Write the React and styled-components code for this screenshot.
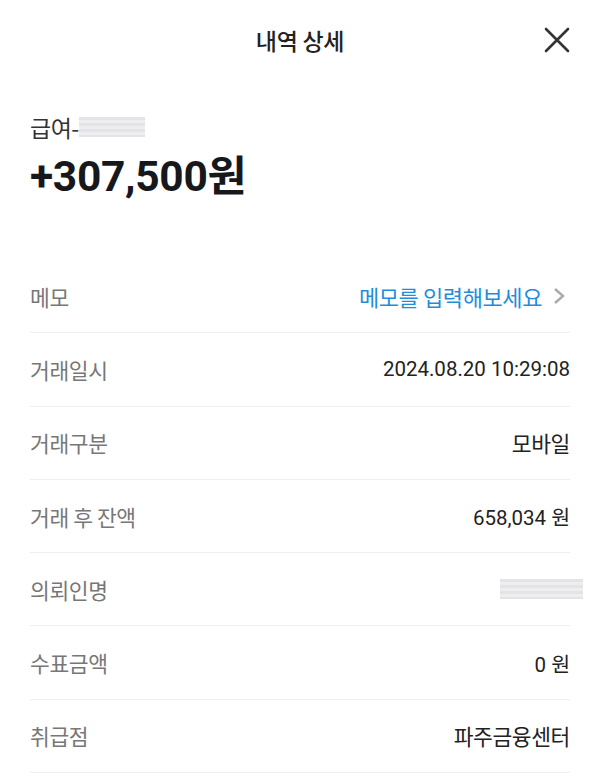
import React from 'react'
import styled, { createGlobalStyle } from 'styled-components';

const GlobalStyle = createGlobalStyle`
    body {
        margin: 0;
        background: #fff;
        font-family: "Noto Sans CJK KR", "Noto Sans", sans-serif;
    }
`;

const Page = styled.div`
    width: 600px;
    height: 781px;
    overflow: hidden;
    background: #fff;
`;

const Header = styled.div`
    position: relative;
    height: 80px;
    display: flex;
    align-items: center;
    justify-content: center;
`;

const HeaderTitle = styled.h1`
    margin: 0;
    font-size: 23px;
    font-weight: 500;
    color: #222;
    letter-spacing: -0.3px;
`;

const CloseButton = styled.button`
    position: absolute;
    right: 28px;
    top: 25px;
    width: 30px;
    height: 30px;
    padding: 0;
    border: none;
    background: none;
`;

const Summary = styled.div`
    padding: 31px 30px 0;
    height: 180px;
    box-sizing: border-box;
`;

const Source = styled.div`
    display: flex;
    align-items: center;
    font-size: 23px;
    line-height: 32px;
    color: #333;
    letter-spacing: -0.5px;
`;

const Blur = styled.span`
    display: inline-block;
    width: ${p => p.$w}px;
    height: 20px;
    background: repeating-linear-gradient(#e4e4e6 0 3px, #eeeef0 3px 6px);
`;

const Amount = styled.div`
    margin-top: 8px;
    font-family: Roboto, "Noto Sans CJK KR", sans-serif;
    font-size: 42.5px;
    line-height: 52px;
    font-weight: 700;
    color: #16181c;
    letter-spacing: -0.3px;
`;

const List = styled.div`
    padding: 0 30px;
`;

const Row = styled.div`
    box-sizing: border-box;
    height: 73.3px;
    display: flex;
    align-items: center;
    justify-content: space-between;
    border-bottom: 1px solid #eeeff2;
`;

const Label = styled.span`
    font-size: 21.5px;
    color: #777;
    letter-spacing: -0.4px;
`;

const Value = styled.span`
    display: flex;
    align-items: center;
    gap: 11px;
    font-size: ${p => (p.$link ? '22px' : p.$num ? '20.5px' : '21.5px')};
    color: ${p => (p.$link ? '#1f8ddc' : '#222')};
    letter-spacing: ${p => (p.$num ? '0' : '-0.4px')};
    font-family: ${p => (p.$num ? 'Roboto, "Noto Sans CJK KR", sans-serif' : 'inherit')};
`;

const BlurValue = styled(Blur)`
    margin-right: -13px;
`;

const rows = [
    { label: '거래일시', value: '2024.08.20 10:29:08', num: true },
    { label: '거래구분', value: '모바일' },
    { label: '거래 후 잔액', value: '658,034 원', num: true },
    { label: '의뢰인명', blur: true },
    { label: '수표금액', value: '0 원', num: true },
    { label: '취급점', value: '파주금융센터' },
];

const App = () => {
  return (
    <Page>
        <GlobalStyle />
        <Header>
            <HeaderTitle>내역 상세</HeaderTitle>
            <CloseButton>
                <svg width="30" height="30" viewBox="0 0 30 30">
                    <path d="M4 4 L26 26 M26 4 L4 26" stroke="#333" strokeWidth="2.6" strokeLinecap="round" />
                </svg>
            </CloseButton>
        </Header>
        <Summary>
            <Source>급여-<Blur $w={66} /></Source>
            <Amount>+307,500원</Amount>
        </Summary>
        <List>
            <Row>
                <Label>메모</Label>
                <Value $link>
                    메모를 입력해보세요
                    <svg width="17" height="20" viewBox="0 0 17 20">
                        <path d="M2 3 L10 10 L2 17" stroke="#aaa" strokeWidth="2.4" fill="none" />
                    </svg>
                </Value>
            </Row>
            {rows.map(r => (
                <Row key={r.label}>
                    <Label>{r.label}</Label>
                    {r.blur ? <BlurValue $w={83} /> : <Value $num={r.num}>{r.value}</Value>}
                </Row>
            ))}
        </List>
    </Page>
  )
}

export default App
